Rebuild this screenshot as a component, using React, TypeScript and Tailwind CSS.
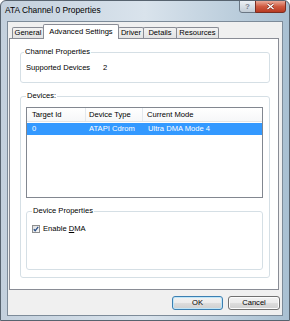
import React from 'react';

const tabs = [
  { label: 'General', w: 'w-[32px]', active: false },
  { label: 'Advanced Settings', w: 'w-[76px]', active: true },
  { label: 'Driver', w: 'w-[26px]', active: false },
  { label: 'Details', w: 'w-[34px]', active: false },
  { label: 'Resources', w: 'w-[43px]', active: false },
];

function CheckBox() {
  return (
    <svg width="8" height="8" viewBox="0 0 8 8" className="shrink-0">
      <defs>
        <linearGradient id="cb" x1="0" y1="0" x2="1" y2="1">
          <stop offset="0" stopColor="#dcdcdc" />
          <stop offset="1" stopColor="#fbfbfb" />
        </linearGradient>
      </defs>
      <rect x="0.5" y="0.5" width="7" height="7" fill="url(#cb)" stroke="#8e8f8f" />
      <path d="M1.8 4.2 L3.2 5.8 L6.2 1.8" fill="none" stroke="#2a4f87" strokeWidth="1.3" />
    </svg>
  );
}

export default function App() {
  return (
    <div className="w-[290px] h-[321px] flex flex-col overflow-hidden rounded-t-[6px] border border-[#57636f] bg-gradient-to-r from-[#c3d0dd] via-[#d9e3ec] to-[#a9c0d2] font-['Liberation_Sans',Arial,sans-serif] text-[7.6px] leading-[10px] text-black">
      {/* title bar */}
      <div className="h-[20px] flex items-start shrink-0">
        <div className="pl-[4px] pt-[4px] text-[8.4px] leading-[11px] flex-1">ATA Channel 0 Properties</div>
        <div className="flex mr-[3px] -mt-[1px]">
          <div className="w-[17px] h-[13px] rounded-bl-[3px] border border-[#6a7684] bg-gradient-to-b from-[#edf1f5] to-[#c2ccd6] flex items-center justify-center text-[8px] leading-[8px] text-[#7a8390] font-bold">
            ?
          </div>
          <div className="w-[31px] h-[13px] -ml-[1px] rounded-br-[3px] border border-[#7a2e22] bg-gradient-to-b from-[#e9a998] via-[#cf5a40] to-[#b83a22] flex items-center justify-center">
            <svg width="9" height="7" viewBox="0 0 9 7">
              <path d="M1.5 1 L7.5 6 M7.5 1 L1.5 6" stroke="#7a2a1c" strokeWidth="2.4" />
              <path d="M1.5 1 L7.5 6 M7.5 1 L1.5 6" stroke="#ffffff" strokeWidth="1.4" />
            </svg>
          </div>
        </div>
      </div>

      {/* client area */}
      <div className="flex-1 mx-[6px] mb-[4px] border border-[#7d8b99] bg-[#f0f0f0] flex flex-col">
        {/* tabs */}
        <div className="h-[16px] flex items-end pl-[4px] shrink-0">
          {tabs.map((t, i) => (
            <div
              key={t.label}
              className={
                t.active
                  ? `${t.w} h-[15px] -mb-[1px] -ml-[1px] relative z-10 border border-b-0 border-[#898c95] rounded-t-[2px] bg-white flex items-start justify-center pt-[2px] whitespace-nowrap`
                  : `${t.w} h-[11px] ${i > 0 ? '-ml-[1px]' : ''} border border-b-0 border-[#898c95] rounded-t-[2px] bg-gradient-to-b from-[#f3f3f3] to-[#e3e3e3] flex items-center justify-center whitespace-nowrap`
              }
            >
              {t.label}
            </div>
          ))}
        </div>

        {/* tab panel */}
        <div className="h-[252px] ml-[1px] mr-[3px] border border-[#898c95] bg-white pt-[8px] pl-[10px] pr-[8px] flex flex-col">
          <fieldset className="border border-[#d5dfe5] rounded-[3px] pl-[3px] pt-[6px] pb-[9px]">
            <legend className="px-[1px] leading-[10px]">Channel Properties</legend>
            <div className="flex pl-[2px]">
              <span className="w-[77px]">Supported Devices</span>
              <span>2</span>
            </div>
          </fieldset>

          <fieldset className="mt-[8px] border border-[#d5dfe5] rounded-[3px] pl-[5px] pr-[6px] pt-[6px] pb-[7px]">
            <legend className="px-[1px] leading-[10px]">Devices:</legend>
            {/* list view */}
            <div className="h-[91px] border border-[#828790] bg-white flex flex-col">
              <div className="h-[14px] flex border-b border-[#e5e5e5] bg-gradient-to-b from-white to-[#f6f7f8]">
                <div className="w-[59px] pl-[5px] border-r border-[#e3e8ed] flex items-center">Target Id</div>
                <div className="w-[57px] pl-[3px] border-r border-[#e3e8ed] flex items-center">Device Type</div>
                <div className="flex-1 pl-[4px] flex items-center">Current Mode</div>
              </div>
              <div className="mt-[1px] h-[12px] flex bg-[#3399ff] text-white">
                <div className="w-[59px] pl-[5px] flex items-center">0</div>
                <div className="w-[57px] pl-[3px] flex items-center">ATAPI Cdrom</div>
                <div className="flex-1 pl-[5px] flex items-center">Ultra DMA Mode 4</div>
              </div>
            </div>

            <fieldset className="mt-[8px] h-[64px] border border-[#d5dfe5] rounded-[3px] pl-[5px] pt-[8px]">
              <legend className="px-[1px] leading-[10px]">Device Properties</legend>
              <label className="flex items-center gap-[3px]">
                <CheckBox />
                <span>
                  Enable <span className="underline">D</span>MA
                </span>
              </label>
            </fieldset>
          </fieldset>
        </div>

        {/* buttons */}
        <div className="mt-[6px] flex justify-end gap-[5px] pr-[2px]">
          <button className="w-[51px] h-[14px] rounded-[3px] border border-[#3c7fb1] bg-[linear-gradient(#f2f2f2_0%,#ebebeb_50%,#dddddd_50%,#cfcfcf_100%)] shadow-[inset_0_0_0_1px_#bfe6f9] text-[7.6px] leading-[10px]">
            OK
          </button>
          <button className="w-[52px] h-[14px] rounded-[3px] border border-[#707070] bg-[linear-gradient(#f2f2f2_0%,#ebebeb_50%,#dddddd_50%,#cfcfcf_100%)] shadow-[inset_0_0_0_1px_#fcfcfc] text-[7.6px] leading-[10px]">
            Cancel
          </button>
        </div>
      </div>
    </div>
  );
}
